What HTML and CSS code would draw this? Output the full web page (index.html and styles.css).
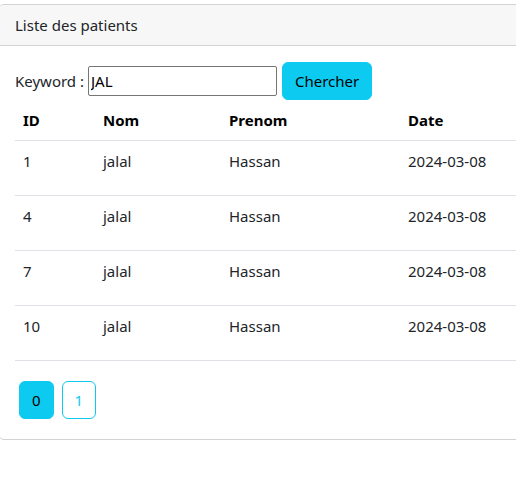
FILE: index.html
```html
<!DOCTYPE html>
<html lang="fr">
<head>
<meta charset="utf-8">
<title>Liste des patients</title>
<link rel="stylesheet" href="styles.css">
</head>
<body>
<div class="card">
  <div class="card-header">Liste des patients</div>
  <div class="card-body">
    <form class="search">
      <label class="search-label">Keyword :</label>
      <input class="search-input" type="text" value="JAL">
      <button class="btn btn-info" type="button">Chercher</button>
    </form>
    <table class="table">
      <thead>
        <tr><th class="c-id">ID</th><th class="c-nom">Nom</th><th class="c-prenom">Prenom</th><th class="c-date">Date</th></tr>
      </thead>
      <tbody>
        <tr><td>1</td><td>jalal</td><td>Hassan</td><td>2024-03-08</td></tr>
        <tr><td>4</td><td>jalal</td><td>Hassan</td><td>2024-03-08</td></tr>
        <tr><td>7</td><td>jalal</td><td>Hassan</td><td>2024-03-08</td></tr>
        <tr><td>10</td><td>jalal</td><td>Hassan</td><td>2024-03-08</td></tr>
      </tbody>
    </table>
    <ul class="pages">
      <li><a class="btn btn-info page">0</a></li>
      <li><a class="btn btn-outline-info page">1</a></li>
    </ul>
  </div>
</div>
</body>
</html>
```

FILE: styles.css
```css
html, body {
  margin: 0;
  overflow: hidden;
}
body {
  padding-top: 4px;
  font-family: "Noto Sans", "Open Sans", sans-serif;
  font-size: 15px;
  line-height: 24px;
  color: #212529;
  background: #fff;
}
.card {
  width: 640px;
  margin-left: -2px;
  border: 1px solid #d3d3d3;
  border-radius: 6px;
}
.card-header {
  background: #f7f7f7;
  border-bottom: 1px solid #d3d3d3;
  border-radius: 5px 5px 0 0;
  padding: 8px 16px;
}
.card-body {
  padding: 16px;
}
.search {
  display: flex;
  align-items: center;
  margin: 0;
}
.search-label {
  margin-right: 4px;
}
.search-input {
  box-sizing: border-box;
  width: 189px;
  height: 30px;
  margin: 0 5px 0 0;
  padding: 1px 2px;
  border: 1px solid #767676;
  border-radius: 2px;
  font-family: inherit;
  font-size: 15px;
  color: #000;
}
.btn {
  display: inline-block;
  box-sizing: border-box;
  height: 38px;
  padding: 6px 12px;
  border: 1px solid transparent;
  border-radius: 6px;
  font-family: inherit;
  font-size: 15px;
  line-height: 24px;
  color: #000;
  text-align: center;
}
.btn-info {
  background: #0dcaf0;
  border-color: #0dcaf0;
}
.btn-outline-info {
  background: #fff;
  border-color: #0dcaf0;
  color: #0dcaf0;
}
.table {
  width: 100%;
  border-collapse: collapse;
  margin-bottom: 16px;
}
.table th, .table td {
  padding: 8px;
  text-align: left;
  vertical-align: top;
  border-bottom: 1px solid #dee2e6;
}
.table th {
  font-weight: 700;
  color: #000;
}
.table tbody td {
  height: 38px;
}
.c-id { width: 64px; }
.c-nom { width: 110px; }
.c-prenom { width: 163px; }
.pages {
  display: flex;
  list-style: none;
  margin: 0;
  padding: 0;
}
.page {
  margin: 4px;
  min-width: 34px;
}
```
